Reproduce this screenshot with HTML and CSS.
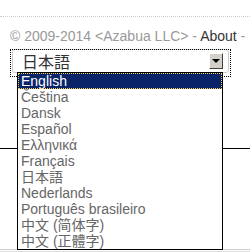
FILE: index.html
```html
<!DOCTYPE html>
<html>
<head>
    <title>Language</title>
    <link rel="stylesheet" href="styles.css">
</head>
<body>
    <div class="rule"></div>
    <div class="footer">
        <span class="copy">&copy; 2009-2014 &lt;Azabua LLC&gt; - </span><a class="about" href="#">About</a><span class="copy"> -</span>
    </div>
    <div class="lang">
        <div class="select">
            <span class="current">日本語</span>
            <span class="button"><span class="arrow"></span></span>
        </div>
        <ul class="options">
            <li class="active">English</li>
            <li>Čeština</li>
            <li>Dansk</li>
            <li>Español</li>
            <li>Ελληνικά</li>
            <li>Français</li>
            <li>日本語</li>
            <li>Nederlands</li>
            <li>Português brasileiro</li>
            <li>中文 (简体字)</li>
            <li>中文 (正體字)</li>
        </ul>
    </div>
    <div class="line"></div>
    <div class="bottom"></div>
</body>
</html>
```

FILE: styles.css
```css
body {
    margin: 0;
    background-color: #fff;
    font-family: "Liberation Sans", Arial, "Noto Sans CJK JP", sans-serif;
    font-size: 14px;
    overflow: hidden;
}
.rule {
    height: 16px;
    border-bottom: 1px dotted #ccc;
}
.footer {
    padding: 11px 0 0 10px;
    line-height: 16px;
    white-space: nowrap;
    color: #999;
}
.about {
    color: #333;
    text-decoration: none;
}
.lang {
    position: relative;
    margin: 5px 0 0 10px;
    width: 221px;
    height: 28px;
    outline: 1px dotted #000;
    outline-offset: -1px;
}
.select {
    margin: 2px;
    height: 22px;
    border: 1px solid #ccc;
    border-radius: 3px;
    display: flex;
    align-items: center;
    justify-content: space-between;
    padding: 0 0 0 9px;
}
.current {
    color: #333;
    font-size: 16px;
}
.button {
    width: 12px;
    height: 14px;
    margin-right: 5px;
    background-color: #d4d0c8;
    border: 1px solid;
    border-color: #fff #404040 #404040 #fff;
    display: flex;
    align-items: center;
    justify-content: center;
}
.arrow {
    width: 0;
    height: 0;
    border-left: 4px solid transparent;
    border-right: 4px solid transparent;
    border-top: 4px solid #000;
}
.options {
    position: absolute;
    left: 7px;
    top: 23px;
    z-index: 2;
    width: 204px;
    margin: 0;
    padding: 0;
    list-style: none;
    background-color: #fff;
    border: 1px solid #000;
}
.options li {
    height: 16px;
    line-height: 16px;
    padding-left: 3px;
    color: #666;
    white-space: nowrap;
}
.options li.active {
    background-color: #0a246a;
    color: #fff;
    outline: 1px dotted #ffd04a;
    outline-offset: -1px;
}
.line {
    margin-top: 71px;
    border-top: 1px solid #000;
}
.bottom {
    margin-top: 100px;
    height: 1px;
    border-top: 1px solid #ccc;
    border-bottom: 1px solid #ddd;
}
```
